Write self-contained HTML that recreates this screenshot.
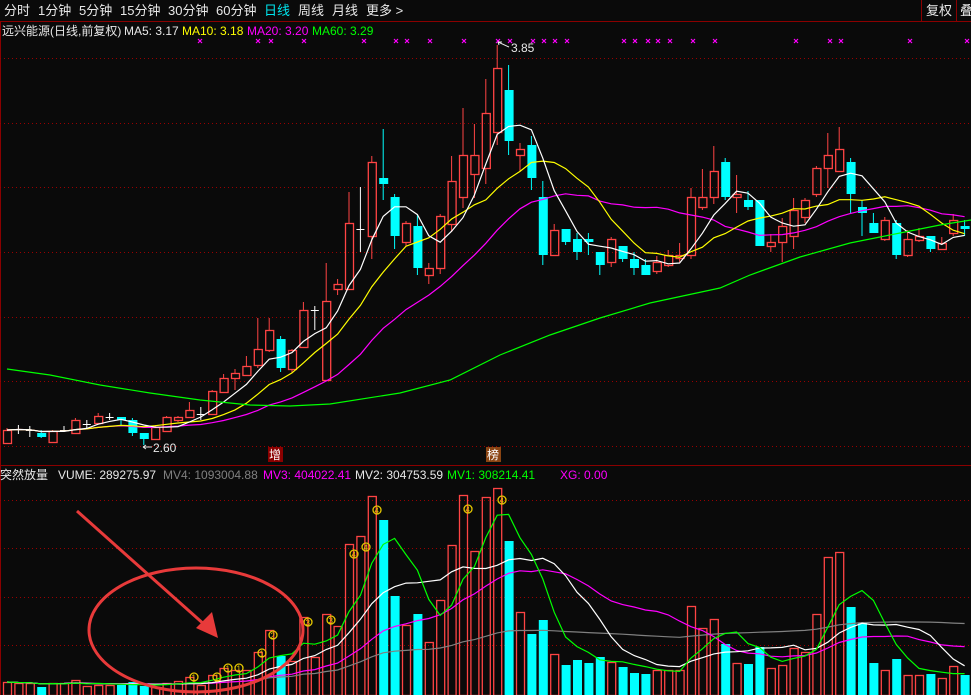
<!DOCTYPE html>
<html><head><meta charset="utf-8">
<style>
html,body{margin:0;padding:0;background:#0a0a0a;width:971px;height:695px;overflow:hidden;font-family:"Liberation Sans","Noto Sans CJK SC",sans-serif;}
svg{position:absolute;left:0;top:0;}
</style></head>
<body>
<svg id="s" width="971" height="695" viewBox="0 0 971 695" xmlns="http://www.w3.org/2000/svg" font-family="Liberation Sans, Noto Sans CJK SC, sans-serif">
<rect width="971" height="695" fill="#0a0a0a"/>
<line x1="0" y1="21.5" x2="971" y2="21.5" stroke="#8b0000"/>
<line x1="0.5" y1="21" x2="0.5" y2="695" stroke="#8b0000"/>
<g fill="#e8e8e8" font-size="13">
<text x="4" y="15">分时</text><text x="38" y="15">1分钟</text><text x="79" y="15">5分钟</text><text x="120" y="15">15分钟</text><text x="168" y="15">30分钟</text><text x="216" y="15">60分钟</text>
<text x="264" y="15" fill="#00e5ee">日线</text><text x="298" y="15">周线</text><text x="332" y="15">月线</text><text x="366" y="15">更多 &gt;</text>
</g>
<line x1="921.5" y1="0" x2="921.5" y2="21" stroke="#8b0000"/>
<line x1="956.5" y1="0" x2="956.5" y2="21" stroke="#8b0000"/>
<text x="926" y="15" fill="#e8e8e8" font-size="13">复权</text>
<text x="960" y="15" fill="#e8e8e8" font-size="13">叠</text>
<g font-size="12">
<text x="2" y="35" fill="#e8e8e8">远兴能源(日线,前复权)</text>
<text x="124" y="35" fill="#e8e8e8">MA5: 3.17</text>
<text x="182" y="35" fill="#ffff00">MA10: 3.18</text>
<text x="247" y="35" fill="#ff00ff">MA20: 3.20</text>
<text x="312" y="35" fill="#00ff00">MA60: 3.29</text>
</g>
<g id="grid" stroke="#900" stroke-dasharray="1 3"></g>
<g id="marks" stroke="#ff00ff" stroke-width="1.2"></g>
<g id="main"></g>
<line x1="0" y1="465.5" x2="971" y2="465.5" stroke="#8b0000"/>
<rect x="268" y="447" width="15" height="15" fill="#8b0000"/><text x="269" y="459" fill="#fff" font-size="12">增</text>
<rect x="486" y="447" width="15" height="15" fill="#8b4513"/><text x="487" y="459" fill="#fff" font-size="12">榜</text>
<g font-size="12">
<text x="0" y="479" fill="#e8e8e8">突然放量</text>
<text x="58" y="479" fill="#e8e8e8">VUME: 289275.97</text>
<text x="163" y="479" fill="#808080">MV4: 1093004.88</text>
<text x="263" y="479" fill="#ff00ff">MV3: 404022.41</text>
<text x="355" y="479" fill="#e8e8e8">MV2: 304753.59</text>
<text x="447" y="479" fill="#00ff00">MV1: 308214.41</text>
<text x="560" y="479" fill="#ff00ff">XG: 0.00</text>
</g>
<g id="vol"></g>
<text x="153" y="452" fill="#e8e8e8" font-size="12">2.60</text>
<path d="M143 447 H152 M143 447 l3 -2 M143 447 l3 2" stroke="#e8e8e8" fill="none"/>
<text x="511" y="52" fill="#e8e8e8" font-size="12">3.85</text>
<path d="M498 42 L509 47 M498 42 l4 0 M498 42 l1 3" stroke="#e8e8e8" fill="none"/>
<ellipse cx="196" cy="630" rx="107" ry="62" fill="none" stroke="#e83a3a" stroke-width="3"/>
<path d="M77 511 L206 626" stroke="#e83a3a" stroke-width="3"/>
<path d="M218 638 L196 628 L212 612 Z" fill="#e83a3a"/>
</svg>
<script>
var NS="http://www.w3.org/2000/svg";
function el(p,t,a){var e=document.createElementNS(NS,t);for(var k in a)e.setAttribute(k,a[k]);p.appendChild(e);return e;}
var g=document.getElementById('grid');
[58,123,187,252,317,381,446,500,548,597,645].forEach(function(y){el(g,'line',{x1:0,x2:971,y1:y+.5,y2:y+.5});});
var mk=document.getElementById('marks');
[200,258,271,304,364,396,407,430,464,498,510,533,544,555,567,624,635,648,658,670,693,715,796,830,841,910,967].forEach(function(x){
el(mk,'path',{d:'M'+(x-2)+' 39 l4 4 M'+(x+2)+' 39 l-4 4'});});
var C=[
['r',430,443,428,444],['w',429,429,425,434],['w',430,430,426,437],['c',433,437,430,438],['r',431,442,430,443],
['w',430,430,426,432],['r',420,433,418,434],['w',424,424,420,428],['r',416,423,413,424],['w',417,417,413,420],
['c',417,420,417,426],['c',420,433,418,436],['c',433,439,433,445],['r',427,439,425,440],['r',417,431,416,432],
['r',417,420,416,422],['r',410,417,402,418],['w',414,414,407,420],['r',391,414,390,415],['r',378,392,374,393],
['r',373,378,369,390],['r',366,375,356,376],['r',349,365,318,368],['r',330,350,318,352],['c',339,368,336,372],
['r',350,369,349,373],['r',310,347,302,348],['w',310,310,306,330],['r',301,380,263,381],['r',284,289,279,295],
['r',223,289,192,290],['w',229,229,187,252],['r',162,236,156,259],['c',178,184,129,200],['c',197,236,194,249],
['r',223,242,221,246],['c',226,268,215,275],['r',268,275,263,284],['r',216,268,214,274],['r',181,224,156,232],
['r',155,197,108,208],['r',155,174,124,198],['r',113,168,79,184],['r',68,132,45,145],['c',90,141,65,155],
['r',149,155,143,172],['c',145,178,136,190],['c',197,255,181,265],['r',230,255,224,256],['c',229,242,229,245],
['c',239,252,233,260],['c',239,242,233,255],['c',252,265,252,275],['r',239,262,237,267],['c',246,259,246,262],
['c',259,268,252,275],['c',265,275,259,275],['r',262,271,256,274],['r',255,265,250,267],['r',255,258,243,262],
['r',197,255,188,259],['r',197,207,169,210],['r',171,197,146,204],['c',162,197,158,200],['r',194,197,175,213],
['c',200,207,191,210],['c',200,246,200,246],['r',242,246,234,252],['r',226,242,218,262],['r',210,236,198,249],
['r',200,217,198,223],['r',168,194,166,197],['r',155,168,133,188],['r',149,171,127,172],['c',162,194,158,213],
['c',207,213,200,236],['c',223,233,213,233],['r',220,239,217,241],['c',223,255,220,259],['r',239,255,230,257],
['r',236,240,228,242],['c',236,249,236,252],['r',243,249,237,250],['r',220,233,214,236],['c',226,229,220,236]];
var V=[682,683,683,687,683,683,680,686,685,685,685,682,686,687,683,681,677,685,675,668,670,670,652,630,656,661,617,657,614,626,
544,536,496,520,596,625,614,642,600,545,495,551,497,488,541,612,634,620,654,665,660,663,657,662,667,673,674,670,670,670,
606,628,619,644,663,664,647,668,665,648,652,614,557,552,607,623,663,670,659,675,675,674,678,666,675];
var X=function(i){return 7+i*11.4;};
var m=document.getElementById('main'),v=document.getElementById('vol');
var RED='#ff4444',CY='#00ffff';
C.forEach(function(c,i){var x=X(i);
 if(c[0]=='w'){el(m,'line',{x1:x,x2:x,y1:c[3],y2:c[4],stroke:'#fff'});el(m,'line',{x1:x-4,x2:x+4,y1:c[1]+.5,y2:c[1]+.5,stroke:'#fff'});}
 else if(c[0]=='r'){el(m,'line',{x1:x,x2:x,y1:c[3],y2:c[1],stroke:RED});el(m,'line',{x1:x,x2:x,y1:c[2],y2:c[4],stroke:RED});
  el(m,'rect',{x:x-3.5,y:c[1]+.5,width:8,height:Math.max(c[2]-c[1],1),fill:'none',stroke:RED,'stroke-width':1.3});}
 else{el(m,'line',{x1:x,x2:x,y1:c[3],y2:c[4],stroke:CY});el(m,'rect',{x:x-4,y:c[1],width:9,height:Math.max(c[2]-c[1],2),fill:CY});}
});
var close=C.map(function(c){return c[0]=='c'?c[2]:c[1];});
function ma(a,n){return a.map(function(_,i){var s=0,k=0;for(var j=Math.max(0,i-n+1);j<=i;j++){s+=a[j];k++;}return s/k;});}
function poly(p,a,col){el(p,'polyline',{points:a.map(function(y,i){return X(i)+','+y.toFixed(1);}).join(' '),fill:'none',stroke:col,'stroke-width':1.2});}
poly(m,ma(close,20),'#ff00ff');poly(m,ma(close,10),'#ffff00');poly(m,ma(close,5),'#ffffff');
el(m,'polyline',{points:'7,369 50,375 100,385 150,393 200,400 250,405 290,406 330,404 400,393 450,380 500,355 550,335 600,318 650,303 720,288 750,275 800,257 850,243 900,233 940,225 971,220',fill:'none',stroke:'#00ff00','stroke-width':1.2});
V.forEach(function(y,i){var x=X(i),c=C[i][0];
 if(c=='c') el(v,'rect',{x:x-4,y:y,width:9,height:695-y,fill:CY});
 else el(v,'rect',{x:x-3.5,y:y+.5,width:8,height:695-y,fill:'none',stroke:RED,'stroke-width':1.3});});
var vol=V.map(function(y){return 695-y;});
function vm(n,col){var a=ma(vol,n).map(function(h){return 695-h;});poly(v,a,col);}
vm(60,'#808080');vm(20,'#ff00ff');vm(10,'#ffffff');vm(5,'#00ff00');
[[194,677,'1'],[217,677,'1'],[228,668,'1'],[239,668,'1'],[262,653,'1'],[273,635,'2'],[308,622,'3'],[331,620,'3'],[354,554,'4'],[366,547,'4'],[377,510,'4'],[468,509,'4'],[502,500,'4']].forEach(function(p){
 el(v,'circle',{cx:p[0],cy:p[1],r:4,fill:'none',stroke:'#e6c800','stroke-width':1.3});
 var t=el(v,'text',{x:p[0]-2.5,y:p[1]+3.5,fill:'#e6c800','font-size':8});t.textContent=p[2];});
</script>
</body></html>
